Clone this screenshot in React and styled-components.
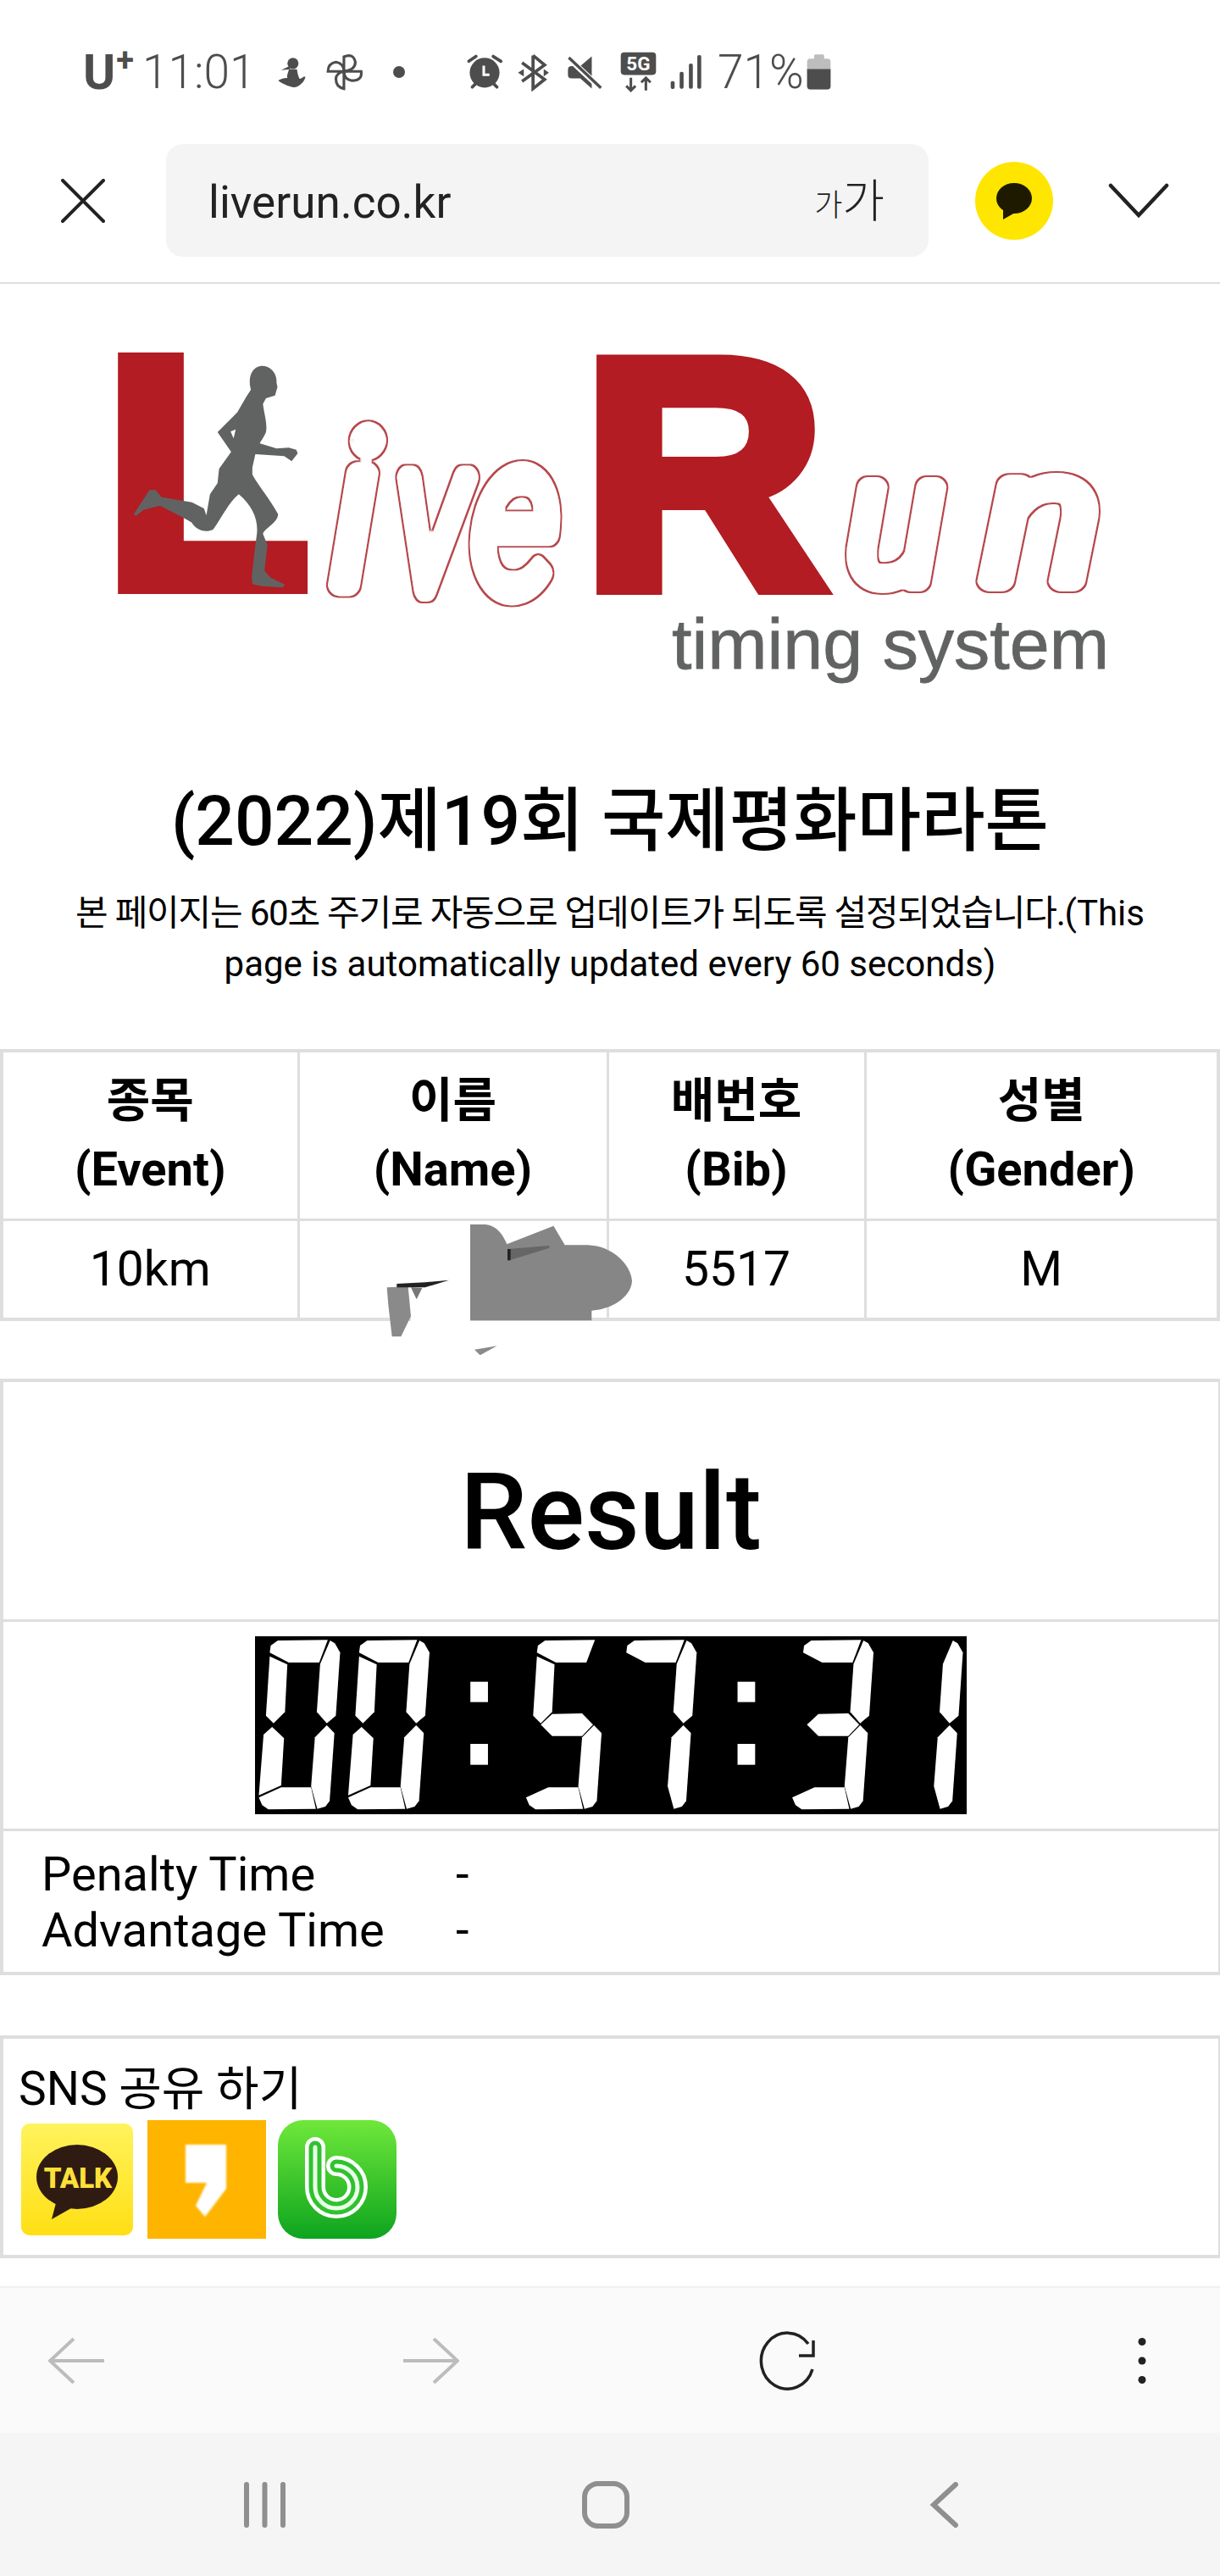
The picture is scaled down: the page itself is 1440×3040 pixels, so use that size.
import React from "react";
import styled, { createGlobalStyle } from "styled-components";

const GlobalStyle = createGlobalStyle`
  html, body { margin: 0; padding: 0; background: #fff; }
  * { box-sizing: border-box; }
  body { font-family: Roboto, "Noto Sans CJK KR", sans-serif; color: #000; }
`;

const Phone = styled.div`
  width: 1440px;
  height: 3040px;
  display: flex;
  flex-direction: column;
  overflow: hidden;
`;

/* status bar */
const StatusBar = styled.div`
  height: 170px;
  display: flex;
  align-items: center;
  padding-left: 98px;
  color: #4d4d4d;
  flex: none;
`;
const Carrier = styled.span`
  font-size: 58px;
  font-weight: 700;
  line-height: 1;
  width: 70px;
  display: flex;
  align-items: flex-start;
  sup { font-size: 38px; line-height: 0.8; font-weight: 700; margin-left: 1px; }
`;
const StatusText = styled.span`
  font-size: 55px;
  font-weight: 300;
  line-height: 1;
  width: ${(p) => p.$w}px;
  margin-left: ${(p) => p.$ml || 0}px;
  flex: none;
`;
const StatusIcon = styled.svg`
  display: block;
  flex: none;
  margin-left: ${(p) => p.$ml || 0}px;
`;

/* browser toolbar */
const Toolbar = styled.div`
  height: 165px;
  flex: none;
  display: flex;
  align-items: flex-start;
  border-bottom: 2px solid #dedede;
  padding-left: 72px;
`;
const ToolIcon = styled.svg`
  display: block;
  flex: none;
  margin-top: ${(p) => p.$mt}px;
  margin-left: ${(p) => p.$ml}px;
`;
const UrlBox = styled.div`
  width: 900px;
  height: 133px;
  margin-left: 72px;
  background: #f4f4f4;
  border-radius: 20px;
  display: flex;
  align-items: center;
  justify-content: space-between;
  padding: 4px 52px 0 50px;
  font-size: 53px;
  color: #222;
`;
const FontSize = styled.span`
  display: flex;
  align-items: flex-end;
  font-weight: 300;
  line-height: 1;
  font-size: 54px;
  small { font-size: 36px; line-height: 1.25; }
`;

/* page content */
const Main = styled.main`
  flex: 1;
  display: flex;
  flex-direction: column;
`;
const LogoArt = styled.svg`
  display: block;
  margin: 75px 0 0 130px;
  flex: none;
  overflow: visible;
`;
const Title = styled.h1`
  margin: 89px 0 0;
  text-align: center;
  font-size: 82px;
  line-height: 100px;
  font-weight: 500;
`;
const Notice = styled.p`
  margin: 29px 0 0;
  padding: 0 85px;
  text-align: center;
  font-size: 42px;
  line-height: 60px;
`;
const Hangul = styled.span`
  letter-spacing: -1.2px;
`;
const TableWrap = styled.div`
  position: relative;
  margin-top: ${(p) => p.$mt}px;
`;
const Table = styled.table`
  width: 1440px;
  table-layout: fixed;
  border-collapse: collapse;
  border: 4px solid #dedede;
  th, td {
    border: 3px solid #dedede;
    text-align: center;
    padding: 0;
  }
  th { height: 199px; font-size: 56px; font-weight: 700; line-height: 81px; }
  td { height: 118px; font-size: 57px; }
`;
const Redaction = styled.svg`
  position: absolute;
  left: 430px;
  top: 192px;
`;
const Box = styled.section`
  border: 4px solid #dedede;
  border-right-width: 2px;
  margin-top: ${(p) => p.$mt}px;
`;
const ResultHead = styled.div`
  height: 283px;
  display: flex;
  align-items: center;
  justify-content: center;
  padding-top: 28px;
  font-size: 126px;
  font-weight: 500;
  border-bottom: 3px solid #dedede;
`;
const ClockRow = styled.div`
  height: 247px;
  display: flex;
  align-items: center;
  justify-content: center;
  border-bottom: 3px solid #dedede;
`;
const Times = styled.dl`
  margin: 0;
  height: 166px;
  padding: 18px 0 0 45px;
  display: grid;
  grid-template-columns: 489px 1fr;
  grid-auto-rows: 66px;
  align-items: center;
  font-size: 56px;
  dt, dd { margin: 0; }
`;
const Share = styled(Box)`
  height: 263px;
  padding: 26px 0 0 18px;
`;
const ShareTitle = styled.div`
  font-size: 55px;
  line-height: 66px;
`;
const ShareIcons = styled.div`
  display: flex;
  align-items: center;
  gap: 14px;
  margin-top: 4px;
`;
const ShareIcon = styled.svg`
  display: block;
  flex: none;
  margin: 0 ${(p) => p.$mx || 0}px;
`;

/* bottom bars */
const BrowserNav = styled.nav`
  margin-top: 33px;
  height: 173px;
  background: #fafafa;
  border-top: 2px solid #efefef;
  display: flex;
  align-items: center;
  justify-content: space-between;
  padding: 0 59px 0 57px;
`;
const SystemNav = styled.nav`
  flex: 1;
  background: #f5f5f5;
  display: flex;
  align-items: center;
  gap: 350px;
  padding-left: 288px;
`;

const RED = "#b21c22";
const GRAY = "#616363";
const ICON = "#4d4d4d";

const SEG = {
  a: "68,155 70,130 85,112 190,110 172,190 108,190",
  f: "68,168 105,197 100,365 76,405 60,378",
  b: "195,112 205,122 216,155 207,378 188,405 167,365 174,195",
  g: "76,410 100,372 163,370 186,410 163,450 100,450",
  e: "73,418 98,458 92,625 45,660 55,445",
  c: "188,412 204,440 194,680 185,700 168,708 155,628 163,455",
  d: "45,668 92,632 155,632 165,708 65,710 52,695",
};
const DIGITS = [
  { x: 0, on: "abcdef" },
  { x: 188, on: "abcdef" },
  { x: 562, on: "afgcd" },
  { x: 750, on: "abc" },
  { x: 1122, on: "abgcd" },
  { x: 1310, on: "bc" },
];

// hollow script letters of the logo, each one placed by itself
const SCRIPT = [
  { ch: "i", x: 392, y: 691, size: 250, w: 52, sw: 30 },
  { ch: "v", x: 468, y: 696, size: 250, w: 84, sw: 32 },
  { ch: "e", x: 558, y: 698, size: 260, w: 100, sw: 32 },
  { ch: "u", x: 1000, y: 686, size: 210, w: 112, sw: 28 },
  { ch: "n", x: 1162, y: 686, size: 215, w: 136, sw: 28 },
];

const Clock = () => (
  <svg width="840" height="210" viewBox="37 97 1497 630" preserveAspectRatio="none" role="img" aria-label="00:57:31">
    <rect x="37" y="97" width="1497" height="630" fill="#000" />
    {DIGITS.map((d, i) => (
      <g key={i} transform={`translate(${d.x} 0)`} fill="#fff">
        {d.on.split("").map((s) => <polygon key={s} points={SEG[s]} />)}
      </g>
    ))}
    <g fill="#fff">
      <rect x="490" y="258" width="37" height="72" />
      <rect x="490" y="478" width="37" height="74" />
      <rect x="1052" y="258" width="37" height="72" />
      <rect x="1052" y="478" width="37" height="74" />
    </g>
  </svg>
);

const Logo = () => (
  <LogoArt width="1200" height="420" viewBox="130 410 1200 420">
    <defs>
      <filter id="hollow" x="-80%" y="-40%" width="260%" height="180%">
        <feMorphology in="SourceAlpha" operator="erode" radius="1.6" result="inner" />
        <feFlood floodColor="#fff" />
        <feComposite in2="inner" operator="in" result="white" />
        <feMerge>
          <feMergeNode in="SourceGraphic" />
          <feMergeNode in="white" />
        </feMerge>
      </filter>
    </defs>
    <text x="123" y="691" fontFamily="'Liberation Sans', sans-serif" fontWeight="700" fontSize="385"
      fill={RED} stroke={RED} strokeWidth="20" textLength="242" lengthAdjust="spacingAndGlyphs">L</text>
    <text x="688" y="692" fontFamily="'Liberation Sans', sans-serif" fontWeight="700" fontSize="383"
      fill={RED} stroke={RED} strokeWidth="20" textLength="285" lengthAdjust="spacingAndGlyphs">R</text>
    {SCRIPT.map((l) => (
      <text key={l.ch} x={l.x} y={l.y} fontFamily="Roboto, sans-serif" fontStyle="italic" fontWeight="300" fontSize={l.size}
        fill="#b8474c" stroke="#b8474c" strokeWidth={l.sw} strokeLinejoin="round" strokeLinecap="round"
        textLength={l.w} lengthAdjust="spacingAndGlyphs" filter="url(#hollow)">{l.ch}</text>
    ))}
    <text x="793" y="789" fontFamily="'Liberation Sans', sans-serif" fontSize="84" fill={GRAY} stroke={GRAY} strokeWidth="0.8"
      textLength="516" lengthAdjust="spacingAndGlyphs">timing system</text>
    <g transform="translate(130 410) scale(0.35714 0.33333)">
      <path fill={GRAY} d="M500 65 C530 65 552 90 550 125 L553 140 L545 170 L515 180 L505 200 C510 240 520 270 515 300 C505 325 495 335 495 340 L550 358 L590 355 L615 362 L620 375 L600 403 L575 385 L480 378 L470 425 L470 450 C490 490 530 540 555 590 C555 620 510 640 505 660 L520 700 L510 790 L530 815 L578 840 L570 850 L500 845 L470 838 L468 810 L480 700 L485 660 C490 610 470 560 425 520 C390 550 360 620 340 645 C310 660 280 640 270 620 C240 600 200 580 165 560 L110 575 L85 597 L78 590 L130 505 L150 505 L170 530 L270 548 L310 570 L318 595 L330 520 L355 480 L360 430 L400 370 L355 300 L420 230 L450 175 L465 150 C455 110 465 70 500 65 Z" />
      <polygon fill="#fff" points="398,298 415,290 408,322" />
    </g>
  </LogoArt>
);

const App = () => (
  <Phone>
    <GlobalStyle />
    <StatusBar>
      <Carrier>U<sup>+</sup></Carrier>
      <StatusText $w={124}>11:01</StatusText>
      <StatusIcon $ml={35} width="36" height="42" viewBox="735 40 115 125" fill={ICON}>
        <circle cx="795" cy="70" r="21" />
        <path d="M750 95 L782 80 L785 92 Z" />
        <path d="M780 92 C775 110 770 120 775 125 C760 125 745 130 740 135 C760 150 790 160 800 160 C815 160 840 140 842 120 L835 120 C830 125 825 128 820 128 C815 120 812 105 810 92 Z" />
      </StatusIcon>
      <StatusIcon $ml={21} width="47" height="46" viewBox="905 35 150 145" fill="none" stroke={ICON} strokeWidth="10">
        <path d="M975 105 L975 50 Q1010 35 1018 70 Q1018 100 975 105" />
        <path d="M975 105 L1040 105 Q1045 140 1005 140 Q975 135 975 105" />
        <path d="M975 105 L975 170 Q945 165 945 135 Q945 110 975 105" />
        <path d="M975 105 L915 105 Q915 75 945 70 Q975 75 975 105" />
      </StatusIcon>
      <StatusIcon $ml={33} width="14" height="14" viewBox="0 0 14 14" fill={ICON}>
        <circle cx="7" cy="7" r="7" />
      </StatusIcon>
      <StatusIcon $ml={72} width="44" height="44" viewBox="60 40 130 125">
        <circle cx="125" cy="105" r="52" fill={ICON} />
        <path d="M70 65 L95 48 M155 48 L182 65 M82 155 L92 145 M168 155 L158 145" stroke={ICON} strokeWidth="11" strokeLinecap="round" />
        <path d="M122 80 V112 H142" fill="none" stroke="#fff" strokeWidth="9" />
      </StatusIcon>
      <StatusIcon $ml={16} width="40" height="46" viewBox="245 35 115 135" fill={ICON}>
        <path d="M300 45 V160 L340 128 L262 70 M300 45 L340 78 L262 135" fill="none" stroke={ICON} strokeWidth="11" />
        <polygon points="248,105 268,92 268,118" />
        <polygon points="355,105 337,92 337,118" />
      </StatusIcon>
      <StatusIcon $ml={18} width="44" height="44" viewBox="415 40 130 125">
        <path d="M505 48 V160 L465 125 H435 Q422 125 422 112 V95 Q422 82 435 82 H465 Z" fill={ICON} />
        <path d="M425 55 L535 158" stroke="#fff" strokeWidth="20" />
        <path d="M425 52 L537 158" stroke={ICON} strokeWidth="10" />
      </StatusIcon>
      <StatusIcon $ml={19} width="45" height="48" viewBox="600 28 132 140">
        <rect x="605" y="30" width="122" height="78" rx="12" fill={ICON} />
        <text x="666" y="92" textAnchor="middle" fontFamily="Roboto, sans-serif" fontWeight="700" fontSize="66" fill="#fff">5G</text>
        <path d="M640 118 V162 M624 146 L640 162 L656 146 M692 162 V118 M676 134 L692 118 L708 134" fill="none" stroke={ICON} strokeWidth="9" />
      </StatusIcon>
      <StatusIcon $ml={15} width="38" height="42" viewBox="778 40 115 125" fill={ICON}>
        <rect x="780" y="135" width="14" height="28" rx="6" />
        <rect x="812" y="102" width="14" height="60" rx="6" />
        <rect x="845" y="72" width="14" height="90" rx="6" />
        <rect x="875" y="42" width="14" height="120" rx="6" />
      </StatusIcon>
      <StatusText $w={97} $ml={18}>71%</StatusText>
      <StatusIcon $ml={8} width="29" height="44" viewBox="1268 38 88 130">
        <rect x="1295" y="40" width="36" height="24" rx="5" fill="#bdbdbd" />
        <rect x="1270" y="55" width="84" height="110" rx="11" fill="#bdbdbd" />
        <path d="M1270 92 H1354 V154 Q1354 165 1343 165 H1281 Q1270 165 1270 154 Z" fill={ICON} />
      </StatusIcon>
    </StatusBar>

    <Toolbar>
      <ToolIcon $mt={41} $ml={0} width="52" height="52" viewBox="0 0 52 52" fill="none" stroke="#222" strokeWidth="4" strokeLinecap="round">
        <path d="M2 2 L50 50 M50 2 L2 50" />
      </ToolIcon>
      <UrlBox>
        <span>liverun.co.kr</span>
        <FontSize><small>가</small>가</FontSize>
      </UrlBox>
      <ToolIcon $mt={21} $ml={55} width="92" height="92" viewBox="0 0 92 92">
        <circle cx="46" cy="46" r="46" fill="#ffe600" />
        <ellipse cx="46" cy="43" rx="21" ry="18" fill="#1e1a00" />
        <path d="M33 55 L33 68 L47 60 Z" fill="#1e1a00" />
      </ToolIcon>
      <ToolIcon $mt={46} $ml={65} width="72" height="42" viewBox="0 0 72 42" fill="none" stroke="#222" strokeWidth="4.5" strokeLinecap="round">
        <path d="M3 3 L36 38 L69 3" />
      </ToolIcon>
    </Toolbar>

    <Main>
      <Logo />
      <Title>(2022)제19회 국제평화마라톤</Title>
      <Notice><Hangul>본 페이지는 60초 주기로 자동으로 업데이트가 되도록 설정되었습니다.</Hangul>(This page is automatically updated every 60 seconds)</Notice>

      <TableWrap $mt={70}>
        <Table>
          <colgroup>
            <col style={{ width: 350 }} />
            <col style={{ width: 365 }} />
            <col style={{ width: 304 }} />
            <col />
          </colgroup>
          <thead>
            <tr>
              <th>종목<br />(Event)</th>
              <th>이름<br />(Name)</th>
              <th>배번호<br />(Bib)</th>
              <th>성별<br />(Gender)</th>
            </tr>
          </thead>
          <tbody>
            <tr>
              <td>10km</td>
              <td></td>
              <td>5517</td>
              <td>M</td>
            </tr>
          </tbody>
        </Table>
        <Redaction width="340" height="180" viewBox="0 0 1020 540">
          <rect x="165" y="360" width="210" height="40" fill="#fff" />
          <path fill="#868686" d="M375 45 L430 45 C470 50 490 80 505 115 L670 50 L710 118 L790 118 C880 120 945 190 948 245 C945 300 880 345 805 350 L805 385 L375 385 Z" />
          <polygon fill="#666" points="510,132 655,120 655,128 520,170" />
          <rect x="507" y="132" width="11" height="40" fill="#222" />
          <polygon fill="#8a8a8a" points="80,268 155,265 165,370 130,442 98,442 85,330" />
          <polygon fill="#777" points="165,268 205,270 185,310" />
          <polygon fill="#222" points="115,255 215,250 300,242 215,268 115,268" />
          <polygon fill="#8a8a8a" points="390,488 470,475 410,508" />
        </Redaction>
      </TableWrap>

      <Box $mt={68}>
        <ResultHead>Result</ResultHead>
        <ClockRow><Clock /></ClockRow>
        <Times>
          <dt>Penalty Time</dt><dd>-</dd>
          <dt>Advantage Time</dt><dd>-</dd>
        </Times>
      </Box>

      <Share $mt={71}>
        <ShareTitle>SNS 공유 하기</ShareTitle>
        <ShareIcons>
          <ShareIcon $mx={3} width="132" height="132" viewBox="0 0 132 132">
            <defs>
              <linearGradient id="kakaoBg" x1="0" y1="0" x2="0" y2="1">
                <stop offset="0" stopColor="#fff35c" />
                <stop offset="1" stopColor="#ffdf14" />
              </linearGradient>
            </defs>
            <rect width="132" height="132" rx="10" fill="url(#kakaoBg)" />
            <ellipse cx="66" cy="63" rx="48" ry="38" fill="#2f1b12" />
            <path d="M42 90 L36 113 L66 96 Z" fill="#2f1b12" />
            <text x="67" y="76" textAnchor="middle" fontFamily="Roboto, sans-serif" fontWeight="900" fontSize="33" fill="#ffe03a">TALK</text>
          </ShareIcon>
          <ShareIcon width="140" height="140" viewBox="0 0 140 140">
            <defs>
              <filter id="soft"><feGaussianBlur stdDeviation="1.2" /></filter>
            </defs>
            <rect width="140" height="140" fill="#ffb400" />
            <polygon fill="#fff" filter="url(#soft)" points="45,29 93,29 93,81 68,114 57,101 70,74 45,74" />
          </ShareIcon>
          <ShareIcon width="140" height="140" viewBox="0 0 140 140">
            <defs>
              <linearGradient id="bandBg" x1="0" y1="0" x2="0" y2="1">
                <stop offset="0" stopColor="#6fe83a" />
                <stop offset="1" stopColor="#0ea41f" />
              </linearGradient>
            </defs>
            <rect width="140" height="140" rx="30" fill="url(#bandBg)" />
            <path d="M44 32 V79 A25 25 0 1 0 69 54" fill="none" stroke="#fff" strokeWidth="24" strokeLinecap="round" />
            <path d="M44 32 V79 A25 25 0 1 0 69 54" fill="none" stroke="#2fc22f" strokeWidth="15" strokeLinecap="round" />
            <path d="M44 32 V79 A25 25 0 1 0 69 54" fill="none" stroke="#eaffe6" strokeWidth="5" strokeLinecap="round" />
          </ShareIcon>
        </ShareIcons>
      </Share>

      <BrowserNav>
        <svg width="66" height="54" viewBox="0 0 66 54" fill="none" stroke="#bcbcbc" strokeWidth="4">
          <path d="M66 27 H2 M30 1 L2 27 L30 53" />
        </svg>
        <svg width="66" height="54" viewBox="0 0 66 54" fill="none" stroke="#bcbcbc" strokeWidth="4">
          <path d="M0 27 H64 M36 1 L64 27 L36 53" />
        </svg>
        <svg width="66" height="70" viewBox="0 0 66 70" fill="none" stroke="#222" strokeWidth="3.5">
          <path d="M63 45 A31 33 0 1 1 58 15" />
          <path d="M64 11 V29 H47" />
        </svg>
        <svg width="66" height="54" viewBox="0 0 66 54" fill="#222">
          <circle cx="33" cy="4.5" r="4.5" />
          <circle cx="33" cy="27" r="4.5" />
          <circle cx="33" cy="49.5" r="4.5" />
        </svg>
      </BrowserNav>
      <SystemNav>
        <svg width="49" height="54" viewBox="0 0 49 54" stroke="#8f8f8f" strokeWidth="6" strokeLinecap="round">
          <path d="M3 3 V51 M24.5 3 V51 M46 3 V51" />
        </svg>
        <svg width="56" height="56" viewBox="0 0 56 56" fill="none" stroke="#8f8f8f" strokeWidth="6">
          <rect x="3" y="3" width="50" height="50" rx="16" />
        </svg>
        <svg width="38" height="54" viewBox="0 0 38 54" fill="none" stroke="#8f8f8f" strokeWidth="6" strokeLinecap="round">
          <path d="M35 3 L9 27 L35 51" />
        </svg>
      </SystemNav>
    </Main>
  </Phone>
);

export default App;
